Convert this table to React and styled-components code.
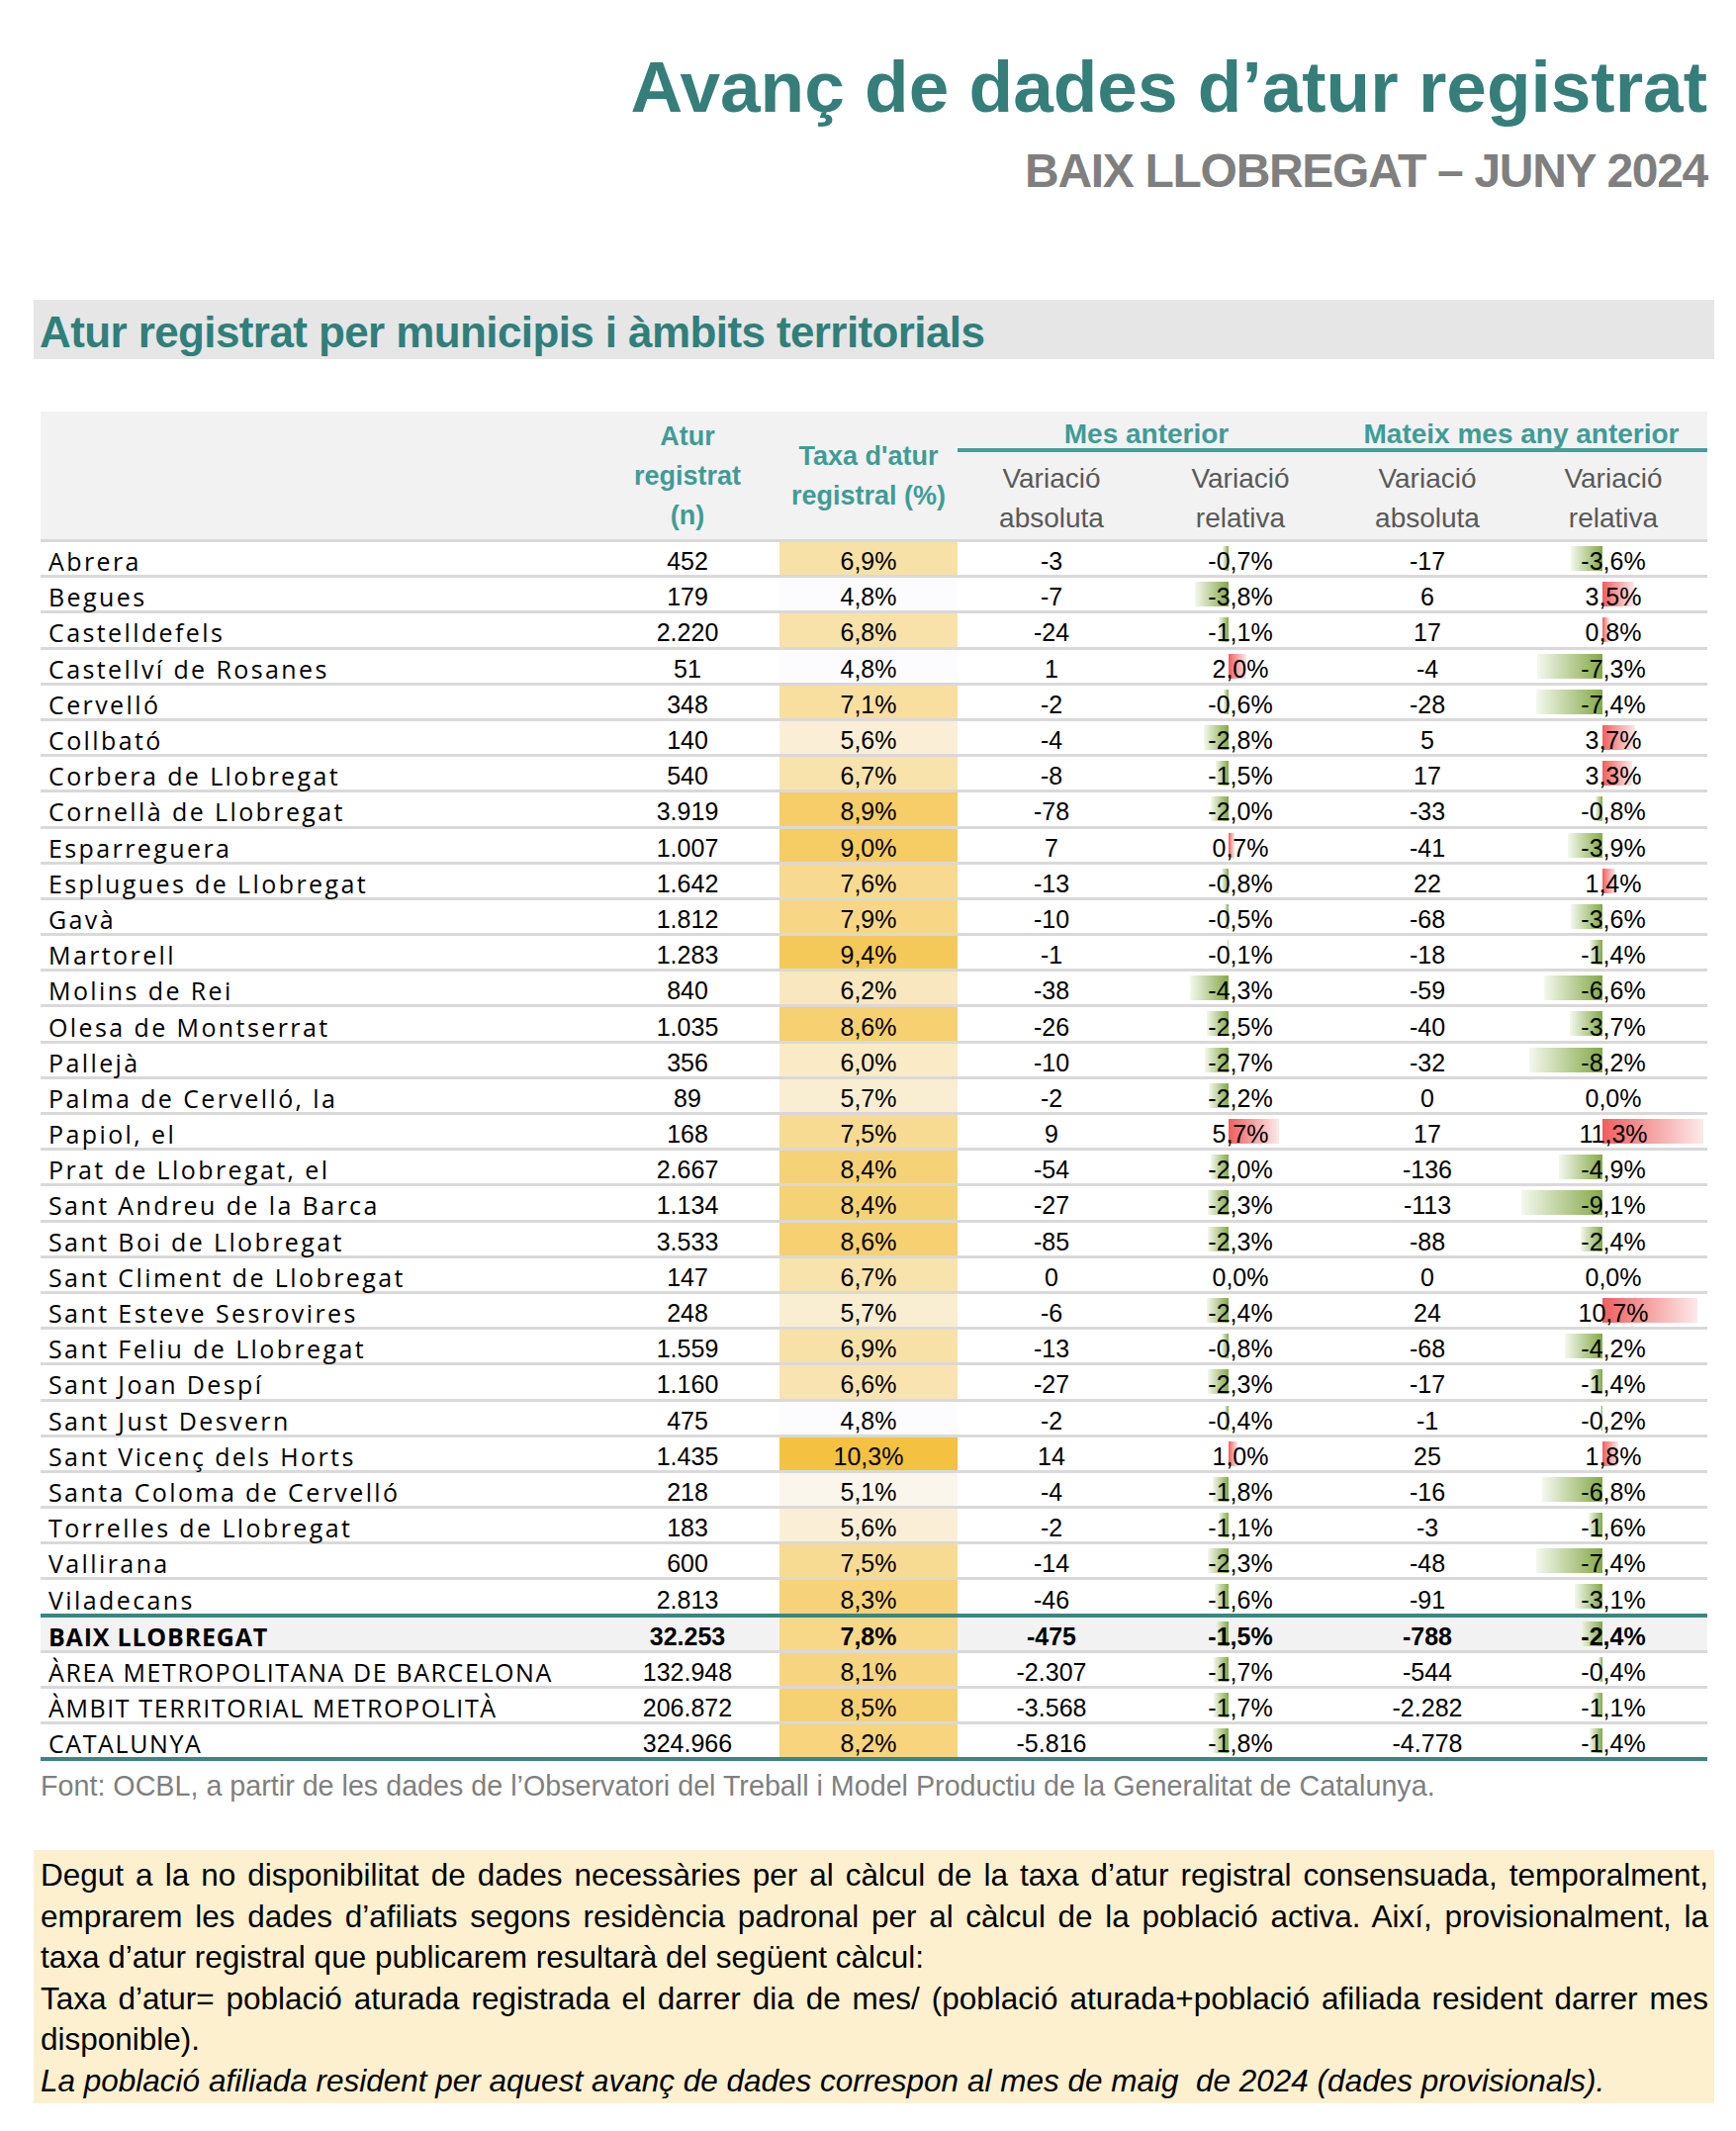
import React from 'react';
import styled, { createGlobalStyle } from 'styled-components';

const GlobalStyle = createGlobalStyle`
  html, body { margin: 0; padding: 0; background: #fff; }
`;

const SANS = `"Liberation Sans", Arial, sans-serif`;
const NAMES = `"Open Sans", "Noto Sans", sans-serif`;
const COLS = '561px 186px 180px 190px 192px 186px 190px';
const TEAL = '#3a8681';
const AXIS = 84; // px from left edge of the relative-variation cell
const PX_PER_POINT = 9;

const rows = [
  ['Abrera', '452', '6,9%', '-3', '-0,7%', '-17', '-3,6%'],
  ['Begues', '179', '4,8%', '-7', '-3,8%', '6', '3,5%'],
  ['Castelldefels', '2.220', '6,8%', '-24', '-1,1%', '17', '0,8%'],
  ['Castellví de Rosanes', '51', '4,8%', '1', '2,0%', '-4', '-7,3%'],
  ['Cervelló', '348', '7,1%', '-2', '-0,6%', '-28', '-7,4%'],
  ['Collbató', '140', '5,6%', '-4', '-2,8%', '5', '3,7%'],
  ['Corbera de Llobregat', '540', '6,7%', '-8', '-1,5%', '17', '3,3%'],
  ['Cornellà de Llobregat', '3.919', '8,9%', '-78', '-2,0%', '-33', '-0,8%'],
  ['Esparreguera', '1.007', '9,0%', '7', '0,7%', '-41', '-3,9%'],
  ['Esplugues de Llobregat', '1.642', '7,6%', '-13', '-0,8%', '22', '1,4%'],
  ['Gavà', '1.812', '7,9%', '-10', '-0,5%', '-68', '-3,6%'],
  ['Martorell', '1.283', '9,4%', '-1', '-0,1%', '-18', '-1,4%'],
  ['Molins de Rei', '840', '6,2%', '-38', '-4,3%', '-59', '-6,6%'],
  ['Olesa de Montserrat', '1.035', '8,6%', '-26', '-2,5%', '-40', '-3,7%'],
  ['Pallejà', '356', '6,0%', '-10', '-2,7%', '-32', '-8,2%'],
  ['Palma de Cervelló, la', '89', '5,7%', '-2', '-2,2%', '0', '0,0%'],
  ['Papiol, el', '168', '7,5%', '9', '5,7%', '17', '11,3%'],
  ['Prat de Llobregat, el', '2.667', '8,4%', '-54', '-2,0%', '-136', '-4,9%'],
  ['Sant Andreu de la Barca', '1.134', '8,4%', '-27', '-2,3%', '-113', '-9,1%'],
  ['Sant Boi de Llobregat', '3.533', '8,6%', '-85', '-2,3%', '-88', '-2,4%'],
  ['Sant Climent de Llobregat', '147', '6,7%', '0', '0,0%', '0', '0,0%'],
  ['Sant Esteve Sesrovires', '248', '5,7%', '-6', '-2,4%', '24', '10,7%'],
  ['Sant Feliu de Llobregat', '1.559', '6,9%', '-13', '-0,8%', '-68', '-4,2%'],
  ['Sant Joan Despí', '1.160', '6,6%', '-27', '-2,3%', '-17', '-1,4%'],
  ['Sant Just Desvern', '475', '4,8%', '-2', '-0,4%', '-1', '-0,2%'],
  ['Sant Vicenç dels Horts', '1.435', '10,3%', '14', '1,0%', '25', '1,8%'],
  ['Santa Coloma de Cervelló', '218', '5,1%', '-4', '-1,8%', '-16', '-6,8%'],
  ['Torrelles de Llobregat', '183', '5,6%', '-2', '-1,1%', '-3', '-1,6%'],
  ['Vallirana', '600', '7,5%', '-14', '-2,3%', '-48', '-7,4%'],
  ['Viladecans', '2.813', '8,3%', '-46', '-1,6%', '-91', '-3,1%'],
];

const totals = [
  ['BAIX LLOBREGAT', '32.253', '7,8%', '-475', '-1,5%', '-788', '-2,4%'],
  ['ÀREA METROPOLITANA DE BARCELONA', '132.948', '8,1%', '-2.307', '-1,7%', '-544', '-0,4%'],
  ['ÀMBIT TERRITORIAL METROPOLITÀ', '206.872', '8,5%', '-3.568', '-1,7%', '-2.282', '-1,1%'],
  ['CATALUNYA', '324.966', '8,2%', '-5.816', '-1,8%', '-4.778', '-1,4%'],
];

const num = (s) => parseFloat(s.replace('.', '').replace(',', '.'));

const rateColor = (s) => {
  const t = Math.pow(Math.min(1, Math.max(0, (num(s) - 4.8) / (10.3 - 4.8))), 0.8);
  const lo = [252, 252, 255];
  const hi = [244, 193, 64];
  const c = lo.map((v, i) => Math.round(v + (hi[i] - v) * t));
  return `rgb(${c.join(',')})`;
};

const Page = styled.div`
  width: 1755px;
  min-height: 2154px;
  box-sizing: border-box;
  padding: 51px 22px 0 34px;
  font-family: ${SANS};
  color: #000;
`;

const Heading = styled.header`
  display: flex;
  flex-direction: column;
  align-items: flex-end;
  padding-right: 7px;
`;

const Title = styled.h1`
  margin: 0;
  font-size: 73px;
  line-height: 73px;
  font-weight: 700;
  color: #357e7a;
`;

const Subtitle = styled.div`
  margin-top: 25px;
  font-size: 48px;
  line-height: 48px;
  font-weight: 700;
  color: #7f7f7f;
  letter-spacing: -1.3px;
`;

const SectionBand = styled.h2`
  margin: 106px 0 0;
  height: 60px;
  box-sizing: border-box;
  padding: 5px 0 0 6px;
  background: #e6e6e6;
  font-size: 44px;
  line-height: 55px;
  font-weight: 700;
  color: #2f7f7a;
  letter-spacing: -0.6px;
`;

const Table = styled.div`
  margin: 53px 7px 0;
`;

const HeaderGrid = styled.div`
  display: grid;
  grid-template-columns: ${COLS};
  grid-template-rows: 37px 4px 88px;
  background: #f2f2f2;
  border-bottom: 3px solid #d9d9d9;
`;

const HeadLabel = styled.div`
  grid-column: ${(p) => p.$col};
  grid-row: 1 / 4;
  align-self: center;
  text-align: center;
  font-size: 27px;
  line-height: 40px;
  font-weight: 700;
  color: #3f9c95;
`;

const GroupTitle = styled.div`
  grid-column: ${(p) => p.$col};
  grid-row: 1;
  align-self: end;
  text-align: center;
  font-size: 28px;
  line-height: 28px;
  font-weight: 700;
  color: #3f9c95;
`;

const GroupRule = styled.div`
  grid-column: 4 / 8;
  grid-row: 2;
  background: #449f98;
`;

const SubLabel = styled.div`
  grid-column: ${(p) => p.$col};
  grid-row: 3;
  align-self: center;
  padding-top: 6px;
  text-align: center;
  font-size: 28px;
  line-height: 40px;
  color: #595959;
`;

const lineFor = (kind) =>
  kind === 'teal' ? `4px solid ${TEAL}` : kind === 'none' ? 'none' : '3px solid #d9d9d9';

const Row = styled.div`
  display: grid;
  grid-template-columns: ${COLS};
  height: 33.2px;
  border-top: ${(p) => (p.$top ? lineFor(p.$top) : 'none')};
  border-bottom: ${(p) => lineFor(p.$bottom)};
  background: ${(p) => (p.$shade ? '#f2f2f2' : 'transparent')};
  font-size: 25px;
  line-height: 28px;
  font-weight: ${(p) => (p.$bold ? 700 : 400)};
`;

const Cell = styled.div`
  display: flex;
  align-items: center;
  justify-content: center;
  padding-top: 5px;
  white-space: nowrap;
`;

const NameCell = styled(Cell)`
  justify-content: flex-start;
  padding-left: 8px;
  font-family: ${NAMES};
  letter-spacing: ${(p) => p.$spacing};
`;

const RateCell = styled(Cell)``;

const BarCell = styled(Cell)`
  position: relative;
`;

const Bar = styled.div`
  position: absolute;
  top: 4px;
  height: 25px;
  background: ${(p) =>
    p.$neg
      ? 'linear-gradient(to right, #f4f8ee, #84a947)'
      : 'linear-gradient(to right, #ef5f5f, #fde9e9)'};
`;

const BarText = styled.span`
  position: relative;
`;

const Source = styled.p`
  margin: 5px 0 0 7px;
  font-size: 28.7px;
  line-height: 40px;
  color: #7f7f7f;
`;

const NoteBox = styled.section`
  margin-top: 45px;
  padding: 5px 6px 2px 7px;
  background: #fcf0cf;
  font-size: 31.5px;
  line-height: 41.5px;
`;

const NoteLine = styled.div`
  text-align: justify;
  text-align-last: ${(p) => (p.$full ? 'justify' : 'left')};
  font-style: ${(p) => (p.$italic ? 'italic' : 'normal')};
`;

const VariationBar = ({ value }) => {
  const v = num(value);
  const w = Math.abs(v) * PX_PER_POINT;
  return (
    <BarCell>
      {v !== 0 && (
        <Bar $neg={v < 0} style={{ left: v < 0 ? AXIS - w : AXIS, width: w }} />
      )}
      <BarText>{value}</BarText>
    </BarCell>
  );
};

const DataRow = ({ data, spacing, ...rest }) => {
  const [name, n, rate, a1, r1, a2, r2] = data;
  return (
    <Row {...rest}>
      <NameCell $spacing={spacing}>{name}</NameCell>
      <Cell>{n}</Cell>
      <RateCell style={{ background: rateColor(rate) }}>{rate}</RateCell>
      <Cell>{a1}</Cell>
      <VariationBar value={r1} />
      <Cell>{a2}</Cell>
      <VariationBar value={r2} />
    </Row>
  );
};

export default function App() {
  return (
    <Page>
      <GlobalStyle />
      <Heading>
        <Title>Avanç de dades d’atur registrat</Title>
        <Subtitle>BAIX LLOBREGAT – JUNY 2024</Subtitle>
      </Heading>

      <SectionBand>Atur registrat per municipis i àmbits territorials</SectionBand>

      <Table>
        <HeaderGrid>
          <HeadLabel $col="2">
            Atur
            <br />
            registrat
            <br />
            (n)
          </HeadLabel>
          <HeadLabel $col="3">
            Taxa d'atur
            <br />
            registral (%)
          </HeadLabel>
          <GroupTitle $col="4 / 6">Mes anterior</GroupTitle>
          <GroupTitle $col="6 / 8">Mateix mes any anterior</GroupTitle>
          <GroupRule />
          {['absoluta', 'relativa', 'absoluta', 'relativa'].map((k, i) => (
            <SubLabel key={i} $col={i + 4}>
              Variació
              <br />
              {k}
            </SubLabel>
          ))}
        </HeaderGrid>

        {rows.map((r, i) => (
          <DataRow
            key={r[0]}
            data={r}
            spacing="2.4px"
            $bottom={i === rows.length - 1 ? 'none' : 'gray'}
          />
        ))}
        {totals.map((r, i) => (
          <DataRow
            key={r[0]}
            data={r}
            spacing={i === 0 ? '0.8px' : '1.6px'}
            $top={i === 0 ? 'teal' : null}
            $bottom={i === totals.length - 1 ? 'teal' : 'gray'}
            $shade={i === 0}
            $bold={i === 0}
          />
        ))}
      </Table>

      <Source>
        Font: OCBL, a partir de les dades de l’Observatori del Treball i Model Productiu de la
        Generalitat de Catalunya.
      </Source>

      <NoteBox>
        <NoteLine $full>
          Degut a la no disponibilitat de dades necessàries per al càlcul de la taxa d’atur registral
          consensuada, temporalment,
        </NoteLine>
        <NoteLine $full>
          emprarem les dades d’afiliats segons residència padronal per al càlcul de la població
          activa. Així, provisionalment, la
        </NoteLine>
        <NoteLine>taxa d’atur registral que publicarem resultarà del següent càlcul:</NoteLine>
        <NoteLine $full>
          Taxa d’atur= població aturada registrada el darrer dia de mes/ (població aturada+població
          afiliada resident darrer mes
        </NoteLine>
        <NoteLine>disponible).</NoteLine>
        <NoteLine $italic>
          La població afiliada resident per aquest avanç de dades correspon al mes de maig{'\u00a0'} de
          2024 (dades provisionals).
        </NoteLine>
      </NoteBox>
    </Page>
  );
}
